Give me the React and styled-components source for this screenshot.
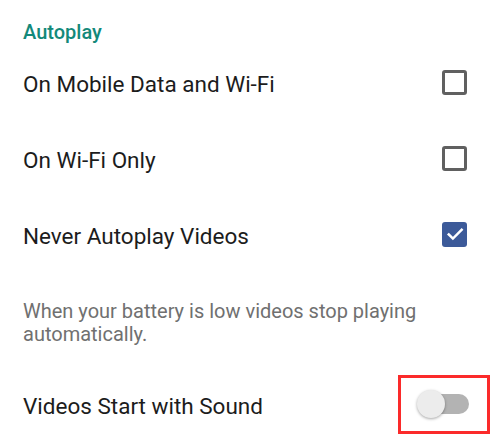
import React from "react";
import styled, { createGlobalStyle } from "styled-components";

const Global = createGlobalStyle`
  html, body { margin: 0; padding: 0; background: #ffffff; }
  body { font-family: Roboto, "Noto Sans", Arial, sans-serif; -webkit-font-smoothing: antialiased; }
`;

const Page = styled.div`
  width: 500px;
  height: 443px;
  overflow: hidden;
  background: #fff;
  display: flex;
  flex-direction: column;
`;

const SectionTitle = styled.div`
  margin: 20px 0 0 23px;
  height: 24px;
  line-height: 24px;
  font-size: 20px;
  font-weight: 500;
  color: #13897a;
`;

const Row = styled.div`
  height: 76px;
  display: flex;
  align-items: center;
  justify-content: space-between;
  padding: 0 33px 0 23px;
  flex-shrink: 0;
`;

const Label = styled.span`
  font-size: 22.5px;
  color: #1c1c1c;
  line-height: 28px;
  margin-top: 3px;
`;

const Box = styled.span`
  width: 25px;
  height: 25px;
  box-sizing: border-box;
  border-radius: 3px;
  border: ${(p) => (p.$checked ? "none" : "3px solid #606060")};
  background: ${(p) => (p.$checked ? "#3c5a99" : "transparent")};
  display: flex;
  align-items: center;
  justify-content: center;
`;

const Description = styled.p`
  margin: 28px 16px 20px 23px;
  font-size: 20px;
  line-height: 23px;
  color: #707070;
`;

const Highlight = styled.div`
  margin-right: -23px;
  width: 92px;
  height: 59px;
  box-sizing: border-box;
  border: 3px solid #fb2a2a;
  display: flex;
  align-items: center;
  padding-left: 16px;
`;

const Switch = styled.div`
  position: relative;
  width: 52px;
  height: 28px;
  display: flex;
  align-items: center;
`;

const Track = styled.div`
  margin-left: 4px;
  width: 48px;
  height: 20px;
  border-radius: 10px;
  background: #b3b3b3;
`;

const Knob = styled.div`
  position: absolute;
  left: 0;
  top: 0;
  width: 28px;
  height: 28px;
  border-radius: 50%;
  background: #ececec;
  box-shadow: 0 1px 3px rgba(0, 0, 0, 0.35);
`;

const Checkbox = ({ checked }) => (
  <Box $checked={checked}>
    {checked && (
      <svg width="20" height="20" viewBox="0 0 24 24" fill="none">
        <path d="M4.5 12.5l5 5L20 7" stroke="#fff" strokeWidth="3" strokeLinecap="square" />
      </svg>
    )}
  </Box>
);

export default function App() {
  return (
    <Page>
      <Global />
      <SectionTitle>Autoplay</SectionTitle>
      <Row>
        <Label>On Mobile Data and Wi-Fi</Label>
        <Checkbox />
      </Row>
      <Row>
        <Label>On Wi-Fi Only</Label>
        <Checkbox />
      </Row>
      <Row>
        <Label>Never Autoplay Videos</Label>
        <Checkbox checked />
      </Row>
      <Description>When your battery is low videos stop playing automatically.</Description>
      <Row>
        <Label>Videos Start with Sound</Label>
        <Highlight>
          <Switch>
            <Track />
            <Knob />
          </Switch>
        </Highlight>
      </Row>
    </Page>
  );
}
